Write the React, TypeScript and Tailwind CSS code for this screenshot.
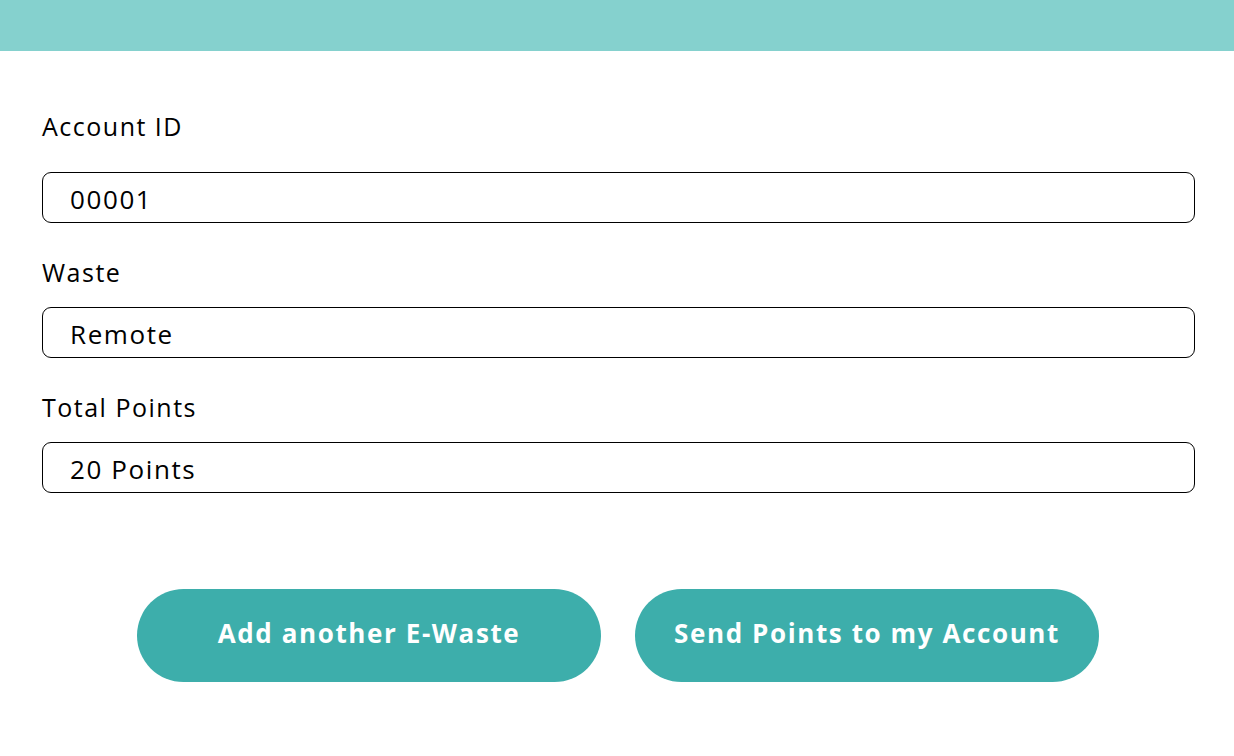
const fields = [
  { label: "Account ID", value: "00001" },
  { label: "Waste", value: "Remote" },
  { label: "Total Points", value: "20 Points" },
];

const Field = ({ label, value, first }: { label: string; value: string; first?: boolean }) => {
  return (
    <div className={first ? "mt-[60px] flex flex-col" : "mt-[34px] flex flex-col"}>
      <label className="text-[25px] leading-[30px] tracking-[1.5px] text-black">{label}</label>
      <div
        className={
          first
            ? "mt-[31px] flex h-[51px] items-center rounded-[9px] border border-black pl-[27px] pt-[4px] text-[26px] tracking-[1.6px] text-black"
            : "mt-[20px] flex h-[51px] items-center rounded-[9px] border border-black pl-[27px] pt-[4px] text-[26px] tracking-[1.6px] text-black"
        }
      >
        {value}
      </div>
    </div>
  );
};

export default function App() {
  return (
    <div className="min-h-[756px] w-full bg-white font-['Open_Sans','Liberation_Sans',sans-serif]">
      <div className="h-[51px] w-full bg-[#85d1ce]" />
      <div className="flex flex-col pl-[42px] pr-[39px]">
        {fields.map((f, i) => (
          <Field key={f.label} label={f.label} value={f.value} first={i === 0} />
        ))}
      </div>
      <div className="mt-[96px] flex justify-center gap-[34px] pl-[2px]">
        <button className="flex h-[93px] w-[464px] items-center justify-center rounded-full bg-[#3daeab] pb-[5px] text-[26px] font-bold tracking-[1.6px] text-white">
          Add another E-Waste
        </button>
        <button className="flex h-[93px] w-[464px] items-center justify-center rounded-full bg-[#3daeab] pb-[5px] text-[26px] font-bold tracking-[1.6px] text-white">
          Send Points to my Account
        </button>
      </div>
    </div>
  );
}
